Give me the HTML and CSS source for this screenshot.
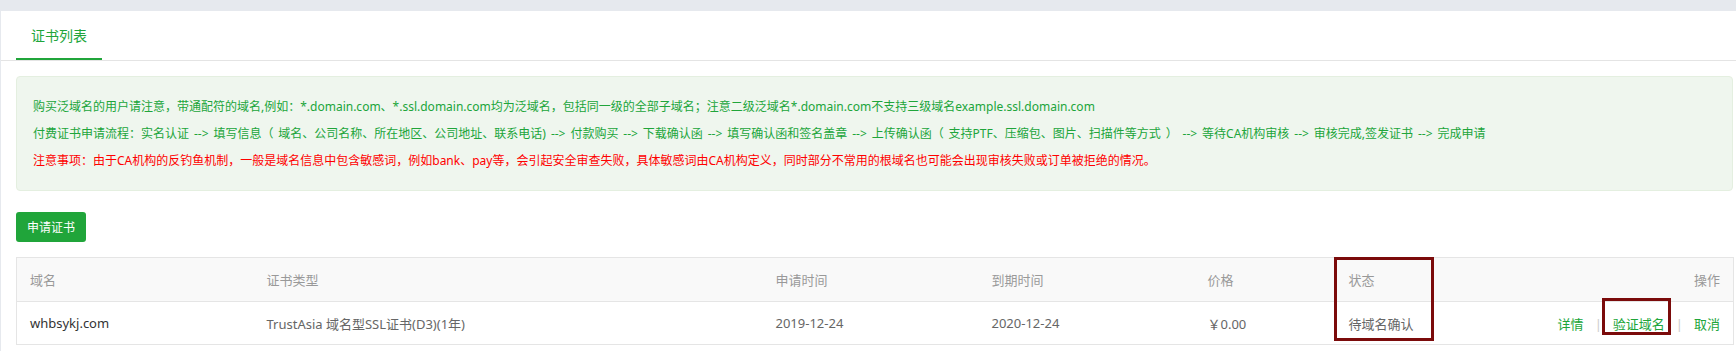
FILE: index.html
```html
<!DOCTYPE html>
<html lang="zh-CN">
<head>
<meta charset="utf-8">
<title>证书列表</title>
<link rel="stylesheet" href="styles.css">
</head>
<body>
<div class="panel">
  <ul class="tabs">
    <li class="tab active">证书列表</li>
  </ul>
  <div class="content">
    <div class="notice">
      <p class="green">购买泛域名的用户请注意，带通配符的域名,例如：*.domain.com、*.ssl.domain.com均为泛域名，包括同一级的全部子域名；注意二级泛域名*.domain.com不支持三级域名example.ssl.domain.com</p>
      <p class="green flow">付费证书申请流程：实名认证 --&gt; 填写信息（ 域名、公司名称、所在地区、公司地址、联系电话) --&gt; 付款购买 --&gt; 下载确认函 --&gt; 填写确认函和签名盖章 --&gt; 上传确认函（ 支持PTF、压缩包、图片、扫描件等方式 ） --&gt; 等待CA机构审核 --&gt; 审核完成,签发证书 --&gt; 完成申请</p>
      <p class="red">注意事项：由于CA机构的反钓鱼机制，一般是域名信息中包含敏感词，例如bank、pay等，会引起安全审查失败，具体敏感词由CA机构定义，同时部分不常用的根域名也可能会出现审核失败或订单被拒绝的情况。</p>
    </div>
    <button class="btn">申请证书</button>
    <div class="table-wrap">
      <table class="list">
        <colgroup>
          <col class="c-domain"><col class="c-type"><col class="c-date"><col class="c-date"><col class="c-price"><col class="c-status"><col class="c-op">
        </colgroup>
        <thead>
          <tr>
            <th>域名</th><th>证书类型</th><th>申请时间</th><th>到期时间</th><th>价格</th><th>状态</th><th class="right">操作</th>
          </tr>
        </thead>
        <tbody>
          <tr>
            <td class="domain">whbsykj.com</td>
            <td>TrustAsia 域名型SSL证书(D3)(1年)</td>
            <td>2019-12-24</td>
            <td>2020-12-24</td>
            <td>￥0.00</td>
            <td>待域名确认</td>
            <td class="right ops"><a class="link">详情</a><span class="sep">|</span><a class="link">验证域名</a><span class="sep">|</span><a class="link">取消</a></td>
          </tr>
        </tbody>
      </table>
      <div class="mark mark-status"></div>
      <div class="mark mark-verify"></div>
    </div>
  </div>
</div>
</body>
</html>
```

FILE: styles.css
```css
html, body {
  margin: 0;
  padding: 0;
}
body {
  background: #e6e9ee;
  font-family: "Noto Sans", "Noto Sans CJK SC", sans-serif;
  width: 1736px;
  height: 351px;
  overflow: hidden;
}
.panel {
  margin-top: 11px;
  margin-left: 1px;
  background: #fff;
  height: 340px;
}
.tabs {
  list-style: none;
  margin: 0;
  padding: 0 0 0 15px;
  height: 49px;
  border-bottom: 1px solid #e4e4e4;
  display: flex;
}
.tab {
  font-size: 14px;
  line-height: 20px;
  padding: 15px 15px 12px;
  color: #20a53a;
  border-bottom: 2px solid #20a53a;
  height: 20px;
}
.content {
  padding: 15px 0 0 15px;
}
.notice {
  width: 1717px;
  background: #eff6ee;
  border: 1px solid #e4efe0;
  border-radius: 4px;
  padding: 16px 0 16px 16px;
  box-sizing: border-box;
  height: 115px;
}
.notice p {
  margin: 0;
  font-size: 12px;
  line-height: 27px;
  white-space: nowrap;
}
.notice .flow { word-spacing: 1.8px; }
.green { color: #20a53a; }
.red { color: #ff0000; }
.btn {
  display: block;
  margin-top: 21px;
  width: 70px;
  height: 30px;
  background: #20a53a;
  color: #fff;
  border: 0;
  border-radius: 3px;
  font-family: inherit;
  font-size: 12px;
  padding: 0;
}
.table-wrap {
  position: relative;
  margin-top: 15px;
  width: 1718px;
}
.list {
  width: 1718px;
  border-collapse: collapse;
  table-layout: fixed;
  font-size: 13px;
}
.c-domain { width: 237px; }
.c-type { width: 509px; }
.c-date { width: 216px; }
.c-price { width: 141px; }
.c-status { width: 150px; }
.list th {
  background: #f9f9f9;
  color: #999;
  font-weight: normal;
  text-align: left;
  height: 43px;
  padding: 0 13px;
  border-top: 1px solid #e5e5e5;
  border-bottom: 1px solid #e5e5e5;
}
.list th:first-child, .list td:first-child { border-left: 1px solid #e5e5e5; }
.list th:last-child, .list td:last-child { border-right: 1px solid #e5e5e5; }
.list td {
  height: 42px;
  padding: 0 13px;
  color: #666;
  border-bottom: 1px solid #e5e5e5;
  white-space: nowrap;
}
.list td.domain { color: #333; }
.list .right { text-align: right; }
.ops { padding-right: 17px; }
.link { color: #20a53a; }
.sep {
  color: #ccc;
  margin: 0 11px;
}
.mark {
  position: absolute;
  border: 3px solid #7b0b0b;
  box-sizing: border-box;
}
.mark-status {
  left: 1318px;
  top: 0;
  width: 100px;
  height: 84px;
}
.mark-verify {
  left: 1586px;
  top: 41px;
  width: 69px;
  height: 37px;
}
```
